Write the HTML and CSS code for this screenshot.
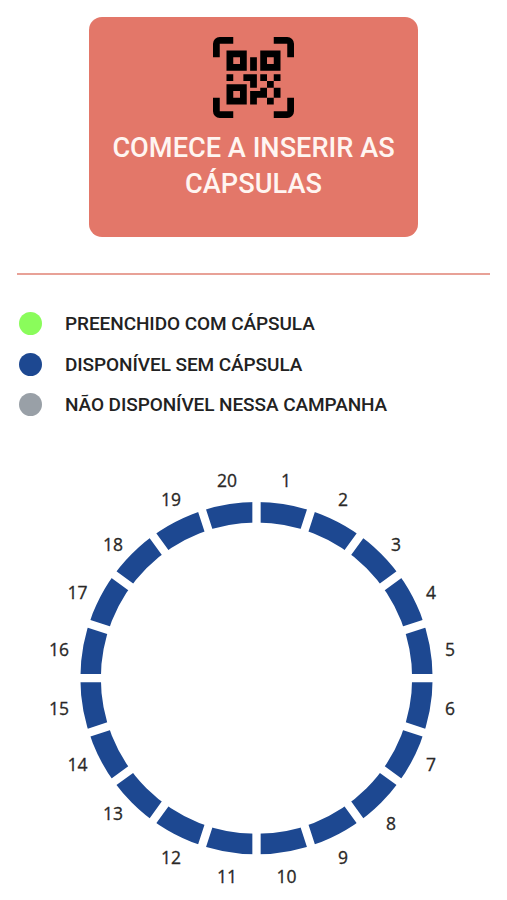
FILE: index.html
```html
<!DOCTYPE html>
<html lang="pt-BR">
<head>
<meta charset="utf-8">
<meta name="viewport" content="width=device-width, initial-scale=1">
<title>Cápsulas</title>
<link rel="stylesheet" href="styles.css">
</head>
<body>
<main class="page">
  <button class="scan" type="button">
    <svg class="scan-icon" viewBox="0 0 12 12" aria-hidden="true">
      <path d="M0 3V1a1 1 0 0 1 1-1h2v1H1v2zM9 0h2a1 1 0 0 1 1 1v2h-1V1H9zM0 9h1v2h2v1H1a1 1 0 0 1-1-1zM11 9h1v2a1 1 0 0 1-1 1H9v-1h2z"/>
      <path fill-rule="evenodd" d="M2 2h3v3H2zM3 3v1h1V3zM7 2h3v3H7zM8 3v1h1V3zM2 7h3v3H2zM3 8v1h1V8z"/>
      <path d="M5.5 3h1v2h-1zM2 5.5h1v1H2zM4.500 5.500h2v2h-1v-1h-1zM7 5.500h1v1H7zM9 5.500h1v1H9zM8 6.500h1v1H8zM7 7.500h1V9H6.500v1h-1V8H7zM9 7.500h1V9H9zM8 9h1v1H8z"/>
    </svg>
    <span class="scan-label">COMECE A INSERIR AS<br>CÁPSULAS</span>
  </button>
  <hr class="divider">
  <ul class="legend">
    <li class="legend-item"><span class="dot filled"></span>PREENCHIDO COM CÁPSULA</li>
    <li class="legend-item"><span class="dot available"></span>DISPONÍVEL SEM CÁPSULA</li>
    <li class="legend-item"><span class="dot unavailable"></span>NÃO DISPONÍVEL NESSA CAMPANHA</li>
  </ul>
  <svg class="wheel" viewBox="0 460 507 440">
    <circle class="ring" cx="256.500" cy="678.200" r="165.900"/>
    <g class="gaps" transform="translate(256.500 678.200)">
      <path id="gap" d="M0-180V-150M0 150V180"/>
      <use href="#gap" transform="rotate(18)"/>
      <use href="#gap" transform="rotate(36)"/>
      <use href="#gap" transform="rotate(54)"/>
      <use href="#gap" transform="rotate(72)"/>
      <use href="#gap" transform="rotate(90)"/>
      <use href="#gap" transform="rotate(108)"/>
      <use href="#gap" transform="rotate(126)"/>
      <use href="#gap" transform="rotate(144)"/>
      <use href="#gap" transform="rotate(162)"/>
    </g>
    <g class="numbers">
      <text x="286" y="487">1</text>
      <text x="343" y="506">2</text>
      <text x="396" y="551">3</text>
      <text x="431" y="599">4</text>
      <text x="450" y="656">5</text>
      <text x="450" y="715">6</text>
      <text x="431" y="771">7</text>
      <text x="391" y="830">8</text>
      <text x="343" y="864">9</text>
      <text x="286.500" y="883">10</text>
      <text x="227" y="883">11</text>
      <text x="171" y="864">12</text>
      <text x="113" y="820">13</text>
      <text x="77.500" y="771">14</text>
      <text x="59" y="715">15</text>
      <text x="59" y="656">16</text>
      <text x="77.500" y="599">17</text>
      <text x="113" y="551">18</text>
      <text x="171" y="506">19</text>
      <text x="227" y="487">20</text>
    </g>
  </svg>
</main>
</body>
</html>
```
FILE: styles.css
```css
* {
  box-sizing: border-box;
}

body {
  margin: 0;
  background: #fff;
  font-family: Roboto, "Liberation Sans", sans-serif;
}

.page {
  display: flex;
  flex-direction: column;
  height: 900px;
  padding-top: 17px;
  overflow: hidden;
}

.scan {
  display: flex;
  flex-direction: column;
  align-items: center;
  width: 329px;
  height: 220px;
  margin-left: 89px;
  padding: 20px 0 0;
  border: 0;
  border-radius: 13px;
  background: #e37769;
  color: #fff5f1;
  font: 500 27.200px/36px Roboto, "Liberation Sans", sans-serif;
}

.scan-icon {
  width: 81px;
  height: 81px;
  fill: #000;
}

.scan-label {
  margin-top: 12px;
  white-space: nowrap;
}

.divider {
  width: 473px;
  height: 2px;
  margin: 36px 0 0 17px;
  border: 0;
  background: #e8a197;
}

.legend {
  display: flex;
  flex-direction: column;
  gap: 17.500px;
  margin: 37px 0 0;
  padding: 0 0 0 19px;
  list-style: none;
}

.legend-item {
  display: flex;
  align-items: center;
  gap: 23px;
  height: 23px;
  color: #222;
  font-size: 19px;
  font-weight: 500;
  letter-spacing: -0.080px;
  white-space: nowrap;
}

.dot {
  width: 23px;
  height: 23px;
  border-radius: 50%;
}

.filled {
  background: #8afc5b;
}

.available {
  background: #1d4891;
}

.unavailable {
  background: #99a0a7;
}

.wheel {
  flex: none;
  width: 507px;
  height: 440px;
  margin-top: 44px;
}

.ring {
  fill: none;
  stroke: #1d4891;
  stroke-width: 20.500;
}

.gaps {
  fill: none;
  stroke: #fff;
  stroke-width: 8.300;
}

.numbers {
  fill: #2a2827;
  stroke: #2a2827;
  stroke-width: 0.300;
  font-family: "Open Sans", "Noto Sans", sans-serif;
  font-size: 17.500px;
  font-weight: 500;
  text-anchor: middle;
}
```
